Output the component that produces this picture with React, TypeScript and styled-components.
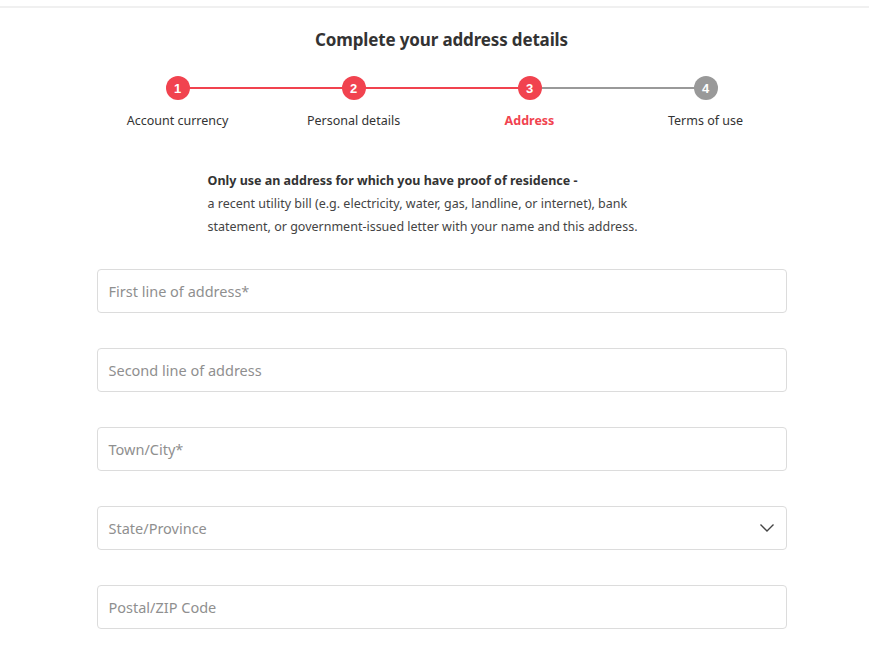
import React from "react";
import styled, { createGlobalStyle } from "styled-components";

const GlobalStyle = createGlobalStyle`
  body {
    margin: 0;
    background: #fff;
    font-family: "Noto Sans", "Open Sans", Arial, sans-serif;
    color: #333;
  }
`;

const RED = "#f1434f";
const GREY = "#999";

const Page = styled.div`
  border-top: 2px solid #f0f0f0;
  margin-top: 6px;
  padding: 0 0 40px 14px;
`;

const Title = styled.h1`
  margin: 20px 0 0;
  text-align: center;
  font-size: 17px;
  font-weight: 700;
  color: #333;
  letter-spacing: -0.15px;
`;

const Stepper = styled.div`
  width: 704px;
  margin: 25px auto 0;
  display: grid;
  grid-template-columns: repeat(4, 1fr);
`;

const Step = styled.div`
  position: relative;
  display: flex;
  flex-direction: column;
  align-items: center;
`;

const Connector = styled.div<{ done: boolean }>`
  position: absolute;
  top: 11px;
  left: 50%;
  width: 100%;
  height: 2px;
  background: ${(p) => (p.done ? RED : GREY)};
`;

const Circle = styled.div<{ active: boolean }>`
  position: relative;
  z-index: 1;
  width: 24px;
  height: 24px;
  border-radius: 50%;
  background: ${(p) => (p.active ? RED : GREY)};
  color: #fff;
  font-family: "Liberation Sans", Arial, sans-serif;
  font-weight: 700;
  font-size: 13px;
  display: flex;
  align-items: center;
  justify-content: center;
`;

const StepLabel = styled.div<{ current: boolean }>`
  margin-top: 12px;
  font-size: 12.5px;
  color: ${(p) => (p.current ? RED : "#333")};
  font-weight: ${(p) => (p.current ? 700 : 400)};
`;

const Notice = styled.div`
  width: 468px;
  margin: 40px auto 0;
  font-size: 12.5px;
  line-height: 23px;
  color: #444;
`;

const NoticeLead = styled.div`
  font-weight: 700;
  color: #333;
`;

const Form = styled.div`
  width: 690px;
  margin: 31px auto 0;
  display: flex;
  flex-direction: column;
  gap: 35px;
`;

const Field = styled.div`
  position: relative;
  height: 44px;
  box-sizing: border-box;
  border: 1px solid #dcdcdc;
  border-radius: 4px;
  display: flex;
  align-items: center;
  padding: 0 11px;
`;

const Placeholder = styled.span`
  font-size: 14.5px;
  color: #8f8f8f;
  flex: 1;
`;

const Chevron = () => (
  <svg width="16" height="10" viewBox="0 0 16 10" fill="none">
    <path d="M1.5 1.5 L8 8 L14.5 1.5" stroke="#444" strokeWidth="1.4" />
  </svg>
);

const steps = ["Account currency", "Personal details", "Address", "Terms of use"];
const current = 2;

const fields: { label: string; select?: boolean }[] = [
  { label: "First line of address*" },
  { label: "Second line of address" },
  { label: "Town/City*" },
  { label: "State/Province", select: true },
  { label: "Postal/ZIP Code" },
];

export default function App() {
  return (
    <>
      <GlobalStyle />
      <Page>
        <Title>Complete your address details</Title>
        <Stepper>
          {steps.map((s, i) => (
            <Step key={s}>
              {i < steps.length - 1 && <Connector done={i < current} />}
              <Circle active={i <= current}>{i + 1}</Circle>
              <StepLabel current={i === current}>{s}</StepLabel>
            </Step>
          ))}
        </Stepper>
        <Notice>
          <NoticeLead>Only use an address for which you have proof of residence -</NoticeLead>
          a recent utility bill (e.g. electricity, water, gas, landline, or internet), bank
          statement, or government-issued letter with your name and this address.
        </Notice>
        <Form>
          {fields.map((f) => (
            <Field key={f.label}>
              <Placeholder>{f.label}</Placeholder>
              {f.select && <Chevron />}
            </Field>
          ))}
        </Form>
      </Page>
    </>
  );
}
